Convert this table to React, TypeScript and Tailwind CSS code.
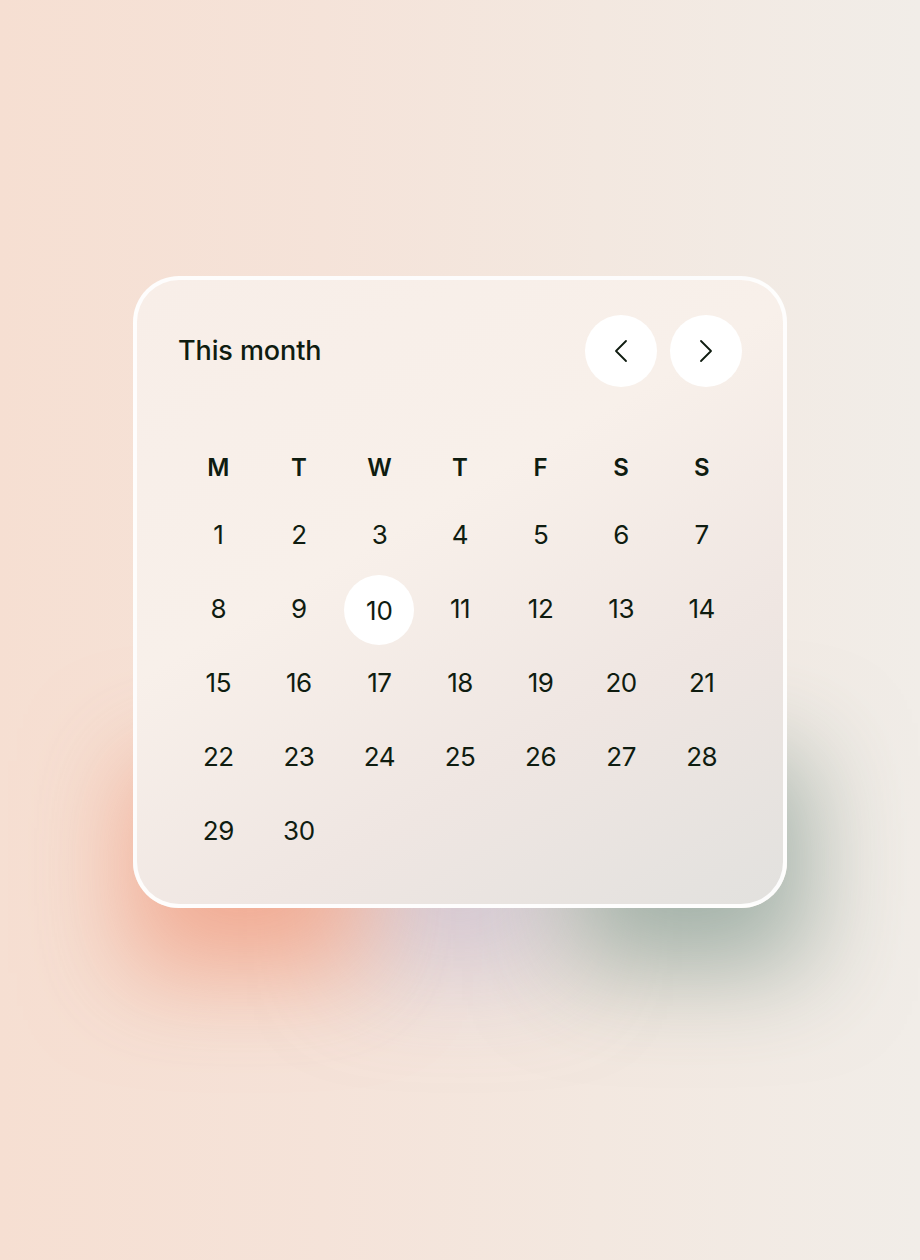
import { ChevronLeft, ChevronRight } from 'lucide-react';

const weekdays = ['M', 'T', 'W', 'T', 'F', 'S', 'S'];
const days = Array.from({ length: 30 }, (_, i) => i + 1);
const today = 10;

export default function App() {
    return (
        <div
            className="flex min-h-[1260px] w-full items-start justify-center bg-[linear-gradient(90deg,#f6dfd2_0%,#f5e3d9_35%,#f3e8e0_65%,#f1ede8_100%)] pt-[276px] text-[#0f1c10]"
            style={{ fontFamily: 'Inter, "Noto Sans", sans-serif' }}
        >
            {/* colored glows under the card come from stacked offset shadows */}
            <div className="w-[654px] rounded-[46px] border-4 border-white/90 bg-[linear-gradient(150deg,#f8eee8_0%,#f8f0ea_40%,#efe6e2_70%,#e2e1de_100%)] px-[41px] pt-[35px] pb-[37px] shadow-[-215px_275px_100px_-210px_rgba(240,150,120,0.72),230px_270px_100px_-210px_rgba(130,155,145,0.72),0_290px_100px_-225px_rgba(190,180,205,0.55)]">
                <div className="flex items-center justify-between">
                    <h2 className="text-[27px] font-medium tracking-[-0.1px]">This month</h2>
                    <div className="flex gap-[13px]">
                        <button type="button" className="flex size-[72px] items-center justify-center rounded-full bg-white">
                            <ChevronLeft className="size-10" strokeWidth={1.1} />
                        </button>
                        <button type="button" className="flex size-[72px] items-center justify-center rounded-full bg-white">
                            <ChevronRight className="size-10" strokeWidth={1.1} />
                        </button>
                    </div>
                </div>

                <div className="mt-[52px] grid grid-cols-7">
                    {weekdays.map((d, i) => (
                        <div key={i} className="flex h-[58px] items-center justify-center text-[24px] font-semibold">
                            {d}
                        </div>
                    ))}
                    {days.map((d) => (
                        <div key={d} className="flex h-[74px] items-center justify-center">
                            {d === today ? (
                                <span className="mt-1 flex size-[70px] items-center justify-center rounded-full bg-white text-[26px]">
                                    {d}
                                </span>
                            ) : (
                                <span className="text-[26px] tracking-[-0.5px]">{d}</span>
                            )}
                        </div>
                    ))}
                </div>
            </div>
        </div>
    );
}
